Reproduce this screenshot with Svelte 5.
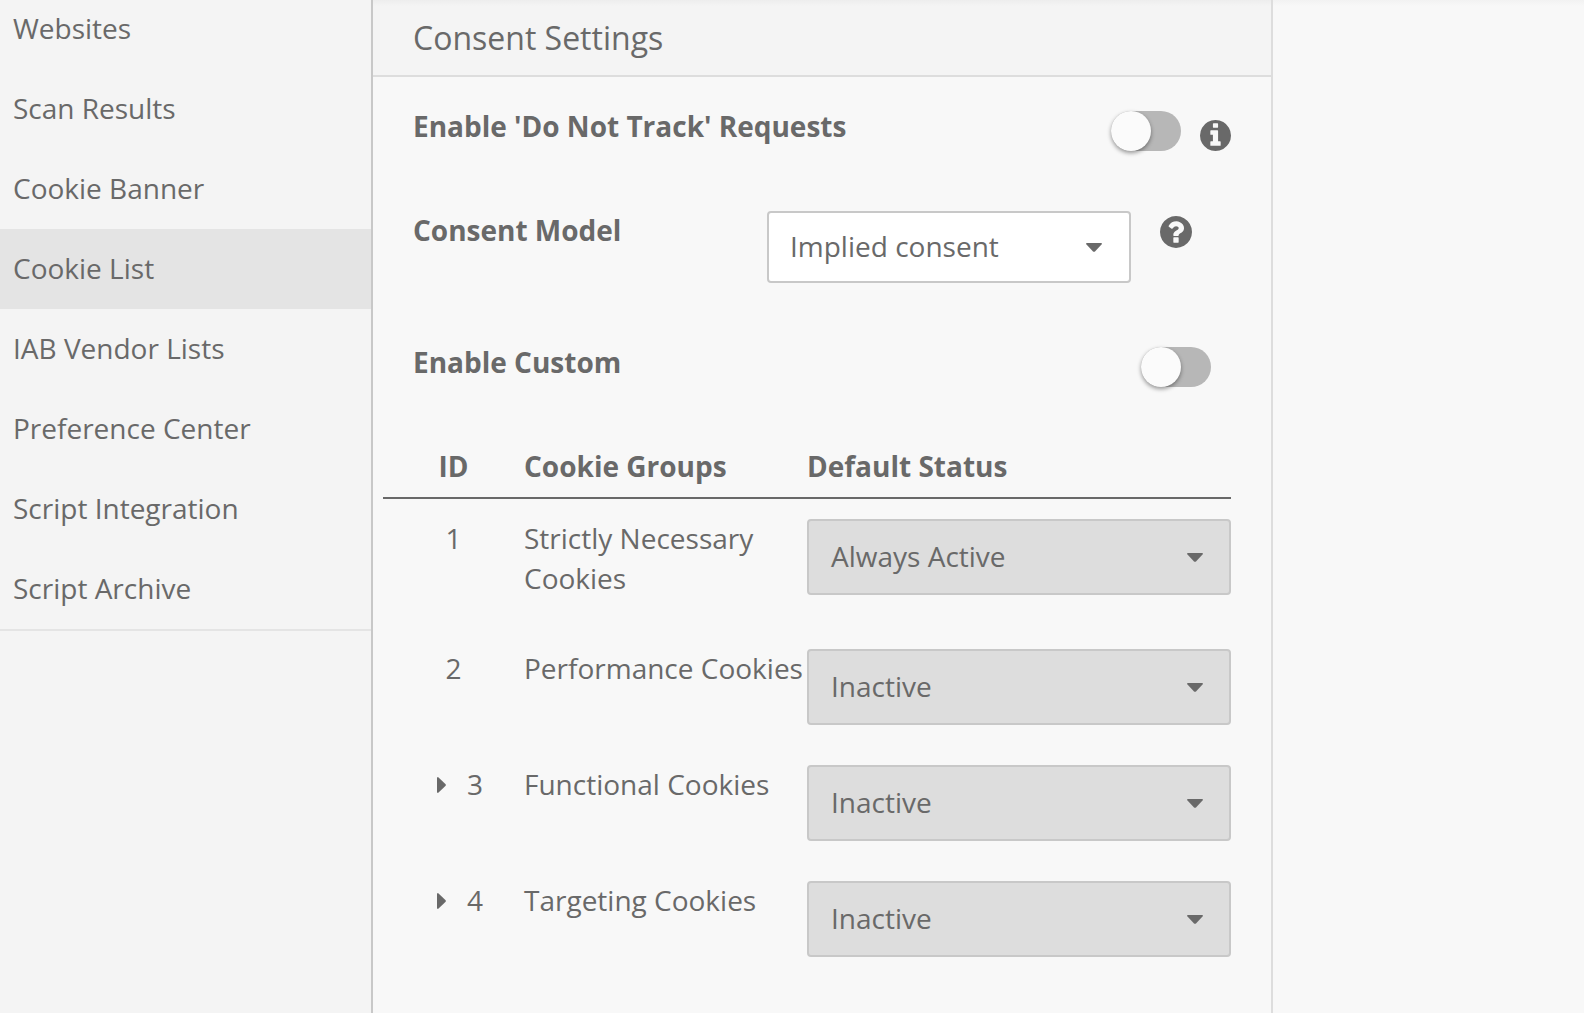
<script>
  const nav = [
    'Websites', 'Scan Results', 'Cookie Banner', 'Cookie List',
    'IAB Vendor Lists', 'Preference Center', 'Script Integration', 'Script Archive'
  ];
  const active = 'Cookie List';
  const groups = [
    { id: 1, name: 'Strictly Necessary Cookies', status: 'Always Active', nested: false },
    { id: 2, name: 'Performance Cookies', status: 'Inactive', nested: false },
    { id: 3, name: 'Functional Cookies', status: 'Inactive', nested: true },
    { id: 4, name: 'Targeting Cookies', status: 'Inactive', nested: true }
  ];
</script>

{#snippet caret()}
  <svg class="caret" viewBox="0 0 16 9" aria-hidden="true"><path d="M1 0H15Q16 .1 16 1L9 8.4Q8 9.3 7 8.4L0 1Q0 .1 1 0Z" /></svg>
{/snippet}

{#snippet toggle()}
  <button class="toggle" role="switch" aria-checked="false" aria-label="Toggle"><span class="knob"></span></button>
{/snippet}

<div class="page">
  <nav class="sidebar">
    <ul>
      {#each nav as item}
        <li class:active={item === active}><span>{item}</span></li>
      {/each}
    </ul>
  </nav>

  <main class="panel">
    <header><h1>Consent Settings</h1></header>

    <section class="row dnt">
      <span class="label">Enable 'Do Not Track' Requests</span>
      {@render toggle()}
      <svg class="info" viewBox="128 128 1536 1536" aria-hidden="true"><path d="M1152 1376v-160q0-14-9-23t-23-9h-96v-512q0-14-9-23t-23-9h-320q-14 0-23 9t-9 23v160q0 14 9 23t23 9h96v320h-96q-14 0-23 9t-9 23v160q0 14 9 23t23 9h448q14 0 23-9t9-23zm-128-896v-160q0-14-9-23t-23-9h-192q-14 0-23 9t-9 23v160q0 14 9 23t23 9h192q14 0 23-9t9-23zm640 416q0 209-103 385.5t-279.5 279.5-385.5 103-385.5-103-279.5-279.5-103-385.5 103-385.5 279.5-279.5 385.5-103 385.5 103 279.5 279.5 103 385.5z" /></svg>
    </section>

    <section class="row model">
      <span class="label">Consent Model</span>
      <div class="select"><span>Implied consent</span>{@render caret()}</div>
      <svg class="help" viewBox="128 128 1536 1536" aria-hidden="true"><path d="M1024 1376v-192q0-14-9-23t-23-9h-192q-14 0-23 9t-9 23v192q0 14 9 23t23 9h192q14 0 23-9t9-23zm256-672q0-88-55.5-163t-138.5-116-170-41q-243 0-371 213-15 24 8 42l132 100q7 6 19 6 16 0 25-12 53-68 86-92 34-24 86-24 48 0 85.500 26t37.500 59q0 38-20 61t-68 45q-63 28-115.500 86.500t-52.500 125.500v36q0 14 9 23t23 9h192q14 0 23-9t9-23q0-19 21.500-49.500t54.500-49.500q32-18 49-28.500t46-35 44.500-48 28-60.500 12.500-81zm384 192q0 209-103 385.500t-279.500 279.500-385.500 103-385.500-103-279.500-279.500-103-385.500 103-385.500 279.500-279.500 385.500-103 385.500 103 279.500 279.500 103 385.500z" /></svg>
    </section>

    <section class="row custom">
      <span class="label">Enable Custom</span>
      {@render toggle()}
    </section>

    <div class="table">
      <div class="grid head">
        <span class="id">ID</span><span>Cookie Groups</span><span>Default Status</span>
      </div>
      {#each groups as g}
        <div class="grid body">
          <div class="id" class:nested={g.nested}>
            {#if g.nested}
              <svg class="arrow" viewBox="0 0 9 16" aria-hidden="true"><path d="M0 1Q.1 0 1 0L8.400 7Q9.300 8 8.400 9L1 16Q.1 16 0 15Z" /></svg>
            {/if}
            <span>{g.id}</span>
          </div>
          <div class="name">{g.name}</div>
          <div class="select disabled"><span>{g.status}</span>{@render caret()}</div>
        </div>
      {/each}
    </div>
  </main>
  <div class="rest"></div>
</div>

<style>
  :global(body) { background: #f8f8f8; overflow: hidden; }
  * { box-sizing: border-box; }
  .page {
    display: flex;
    height: 1013px;
    overflow: hidden;
    font: 28px/40px 'Open Sans', sans-serif;
    color: #696969;
  }
  svg { display: block; fill: #696969; flex: none; }
  .sidebar { flex: none; width: 373px; background: #f4f4f4; border-right: 2px solid #c8c8c8; }
  ul { list-style: none; margin: -11px 0 0; padding: 0; border-bottom: 2px solid #e4e4e4; }
  li { height: 80px; padding: 19px 13px 0; white-space: nowrap; }
  .active { background: #e4e4e4; }
  .panel { flex: none; width: 900px; border-right: 2px solid #ddd; }
  .rest { flex: 1; background: linear-gradient(#f2f2f2, #f8f8f8 6px); }
  header {
    height: 77px;
    padding: 15px 40px 0;
    background: linear-gradient(#ededed, #f4f4f4 6px);
    border-bottom: 2px solid #ddd;
  }
  h1 { margin: 0; font-size: 32px; line-height: 45px; font-weight: 400; }
  .row { display: flex; align-items: flex-start; padding-left: 40px; }
  .label { font-weight: 700; white-space: nowrap; }
  .dnt { height: 104px; padding: 29px 40px 0 40px; }
  .dnt .label, .custom .label { flex: 1; }
  .dnt .toggle { margin-top: 5px; }
  .info { width: 31px; height: 31px; margin: 14px 0 0 19px; }
  .model { height: 136px; padding-top: 29px; }
  .model .label { width: 354px; }
  .model .select { width: 364px; height: 72px; margin-top: 1px; padding-left: 21px; }
  .help { width: 32px; height: 32px; margin: 6px 0 0 29px; }
  .custom { height: 120px; padding: 25px 60px 0 40px; }
  .custom .toggle { margin-top: 5px; }

  .toggle {
    width: 70px;
    height: 40px;
    padding: 0;
    border: 0;
    border-radius: 20px;
    background: #b7b7b7;
    display: flex;
    flex: none;
  }
  .knob {
    width: 40px;
    height: 40px;
    border-radius: 50%;
    background: #fbfbfb;
    box-shadow: 0 2px 4px rgba(0, 0, 0, 0.4);
  }
  .select {
    display: flex;
    align-items: center;
    justify-content: space-between;
    padding: 0 27px 0 22px;
    border: 2px solid #c8c8c8;
    border-radius: 4px;
    background: #fff;
  }
  .select span { margin-top: -2px; }
  .caret { width: 16px; height: 9px; margin-top: 1px; }
  .disabled { height: 76px; padding-right: 26px; background: #ddd; }

  .table { margin: 0 40px 0 10px; }
  .grid { display: grid; grid-template-columns: 141px 283px 424px; align-items: start; white-space: nowrap; }
  .id { text-align: center; }
  .head { font-weight: 700; height: 62px; padding-top: 9px; border-bottom: 2px solid #696969; margin-bottom: 20px; }
  .body { padding-bottom: 40px; }
  .body .id { margin-top: -1px; display: flex; align-items: center; justify-content: center; }
  .body .nested { justify-content: flex-start; padding-left: 54px; gap: 21px; }
  .arrow { width: 9px; height: 16px; margin-top: 2px; }
  .name { margin-top: -1px; padding-bottom: 11px; padding-right: 2px; white-space: normal; }
</style>
